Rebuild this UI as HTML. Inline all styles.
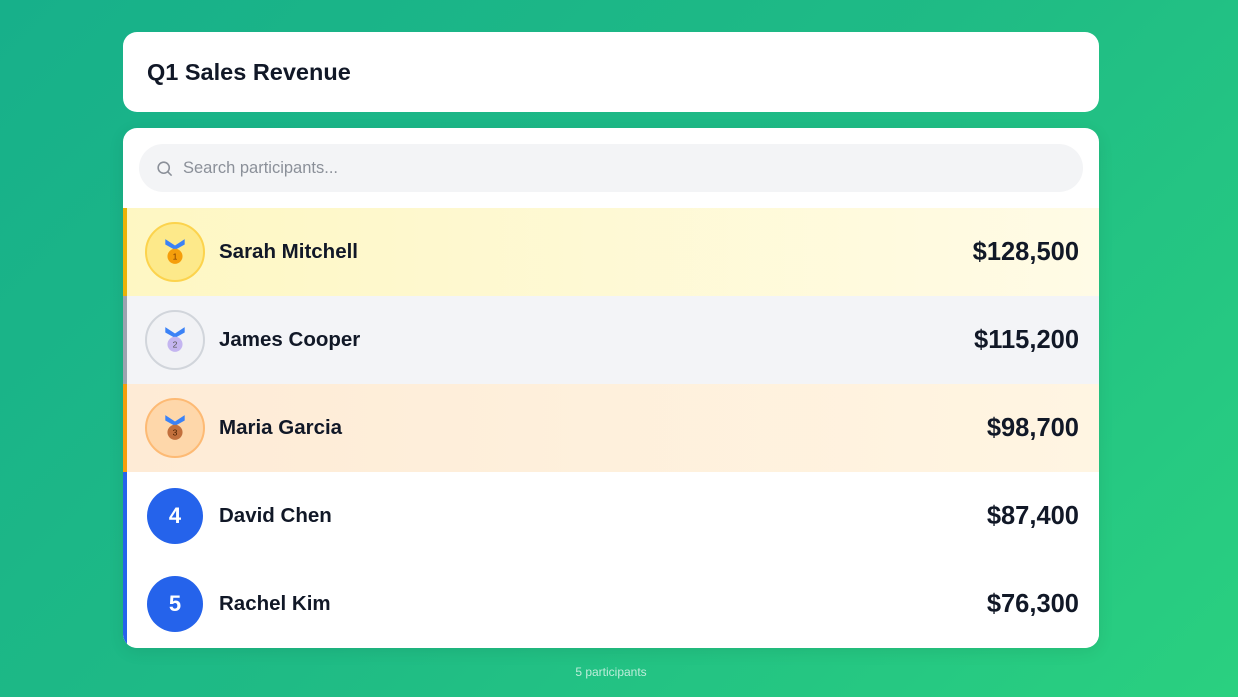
<!DOCTYPE html>
<html><head><style>
*{box-sizing:border-box;margin:0;padding:0}
body{width:1238px;height:697px;overflow:hidden;font-family:"Liberation Sans",sans-serif;background:linear-gradient(135deg,#17b08a 0%,#1fbb85 50%,#2ad080 100%);position:relative}
.hd{position:absolute;left:123px;top:32px;width:976px;height:80px;background:#fff;border-radius:14px;padding:0 24px;display:flex;align-items:center;font-size:23.5px;font-weight:bold;color:#111827}
.card{position:absolute;left:123px;top:128px;width:976px;height:520px;background:#fff;border-radius:14px;overflow:hidden;box-shadow:0 4px 16px rgba(0,0,0,.08)}
.search{margin:16px 16px;height:48px;background:#f3f4f6;border-radius:24px;display:flex;align-items:center;padding-left:16px;color:#8b9099;font-size:16.5px}
.search svg{margin-right:9px}
.row{height:88px;display:flex;align-items:center;padding:0 20px 0 18px;border-left:4px solid}
.av{width:60px;height:60px;border-radius:50%;display:flex;align-items:center;justify-content:center;margin-right:14px;flex:none}
.nm{font-size:20.5px;font-weight:bold;color:#111827;flex:1}
.amt{font-size:25.5px;font-weight:bold;color:#111827}
.num{width:56px;height:56px;background:#2563eb;color:#fff;font-size:22px;font-weight:bold;margin-left:2px;margin-right:16px}
.foot{position:absolute;top:665px;width:100%;text-align:center;font-size:12px;color:rgba(255,255,255,.7);left:-8px}
</style></head><body>
<div class="hd">Q1 Sales Revenue</div>
<div class="card">
<div class="search"><svg width="19" height="19" viewBox="0 0 24 24" fill="none" stroke="#8b9099" stroke-width="2"><circle cx="11" cy="11" r="7"/><path d="M16 16l5 5"/></svg>Search participants...</div>
<div class="row" style="border-color:#eab308;background:linear-gradient(90deg,#fef7c3,#fffbe6)"><div class="av" style="background:#fde98a;border:2px solid #fcd34d"><svg width="24" height="28" viewBox="0 0 22 26"><path d="M2 1l9 6 9-6v5l-9 5-9-5z" fill="#3b82f6"/><circle cx="11" cy="17" r="7" fill="#f59e0b"/><text x="11" y="20" font-size="8" text-anchor="middle" fill="#7c3a00" font-family="Liberation Sans">1</text></svg></div><div class="nm">Sarah Mitchell</div><div class="amt">$128,500</div></div>
<div class="row" style="border-color:#9ca3af;background:#f3f4f7"><div class="av" style="background:#f1f2f5;border:2px solid #d1d5db"><svg width="24" height="28" viewBox="0 0 22 26"><path d="M2 1l9 6 9-6v5l-9 5-9-5z" fill="#3b82f6"/><circle cx="11" cy="17" r="7" fill="#c4b5f0"/><text x="11" y="20" font-size="8" text-anchor="middle" fill="#555" font-family="Liberation Sans">2</text></svg></div><div class="nm">James Cooper</div><div class="amt">$115,200</div></div>
<div class="row" style="border-color:#f59e0b;background:linear-gradient(90deg,#feebd6,#fff5e2)"><div class="av" style="background:#fed7aa;border:2px solid #fdba74"><svg width="24" height="28" viewBox="0 0 22 26"><path d="M2 1l9 6 9-6v5l-9 5-9-5z" fill="#3b82f6"/><circle cx="11" cy="17" r="7" fill="#c2703d"/><text x="11" y="20" font-size="8" text-anchor="middle" fill="#4a2000" font-family="Liberation Sans">3</text></svg></div><div class="nm">Maria Garcia</div><div class="amt">$98,700</div></div>
<div class="row" style="border-color:#2563eb;background:#fff"><div class="av num">4</div><div class="nm">David Chen</div><div class="amt">$87,400</div></div>
<div class="row" style="border-color:#2563eb;background:#fff"><div class="av num">5</div><div class="nm">Rachel Kim</div><div class="amt">$76,300</div></div>
</div>
<div class="foot">5 participants</div>
</body></html>
